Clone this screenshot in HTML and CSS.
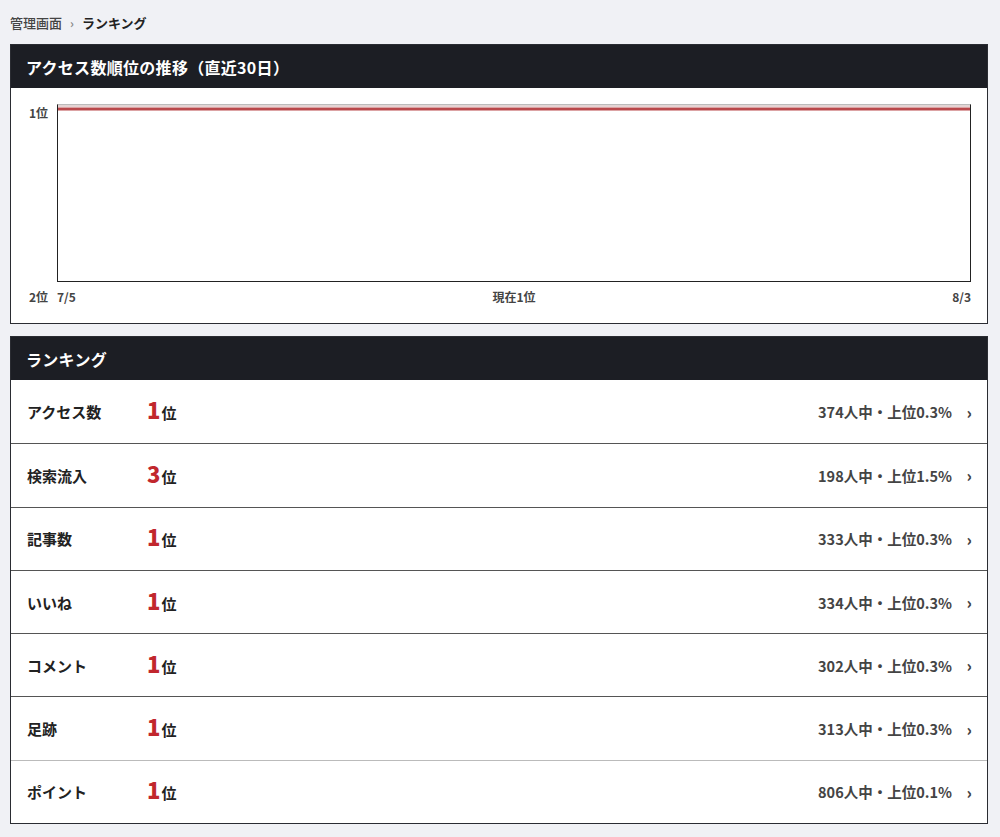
FILE: index.html
```html
<!DOCTYPE html>
<html lang="ja">
<head>
<meta charset="utf-8">
<title>ランキング</title>
<link rel="stylesheet" href="styles.css">
</head>
<body>
<nav class="crumbs">
  <a class="crumb-link" href="#">管理画面</a>
  <span class="crumb-sep">›</span>
  <span class="crumb-current">ランキング</span>
</nav>

<section class="panel">
  <h2 class="panel-head">アクセス数順位の推移（直近30日）</h2>
  <div class="chart">
    <div class="chart-grid">
      <div class="y-top">1位</div>
      <div class="plot">
        <svg class="plot-svg" viewBox="0 0 912 176" preserveAspectRatio="none">
          <line x1="0" y1="1" x2="912" y2="1" stroke="#c9a9a9" stroke-width="1"/>
          <line x1="0" y1="4" x2="912" y2="4" stroke="#b9484b" stroke-width="3"/>
        </svg>
      </div>
      <div class="y-bottom">2位</div>
      <div class="x-axis">
        <span>7/5</span>
        <span>現在1位</span>
        <span>8/3</span>
      </div>
    </div>
  </div>
</section>

<section class="panel">
  <h2 class="panel-head">ランキング</h2>
  <ul class="rank-list">
    <li class="rank-row"><span class="rank-name">アクセス数</span><span class="rank-pos"><b>1</b>位</span><span class="rank-meta">374人中・上位0.3%</span><span class="chev">›</span></li>
    <li class="rank-row"><span class="rank-name">検索流入</span><span class="rank-pos"><b>3</b>位</span><span class="rank-meta">198人中・上位1.5%</span><span class="chev">›</span></li>
    <li class="rank-row"><span class="rank-name">記事数</span><span class="rank-pos"><b>1</b>位</span><span class="rank-meta">333人中・上位0.3%</span><span class="chev">›</span></li>
    <li class="rank-row"><span class="rank-name">いいね</span><span class="rank-pos"><b>1</b>位</span><span class="rank-meta">334人中・上位0.3%</span><span class="chev">›</span></li>
    <li class="rank-row"><span class="rank-name">コメント</span><span class="rank-pos"><b>1</b>位</span><span class="rank-meta">302人中・上位0.3%</span><span class="chev">›</span></li>
    <li class="rank-row"><span class="rank-name">足跡</span><span class="rank-pos"><b>1</b>位</span><span class="rank-meta">313人中・上位0.3%</span><span class="chev">›</span></li>
    <li class="rank-row"><span class="rank-name">ポイント</span><span class="rank-pos"><b>1</b>位</span><span class="rank-meta">806人中・上位0.1%</span><span class="chev">›</span></li>
  </ul>
</section>
</body>
</html>
```

FILE: styles.css
```css
* { box-sizing: border-box; }

html, body {
  margin: 0;
  background: #f0f1f5;
}

body {
  padding: 12px 12px 12px 10px;
  font-family: "Noto Sans CJK JP", "Noto Sans", sans-serif;
  color: #222;
}

.crumbs {
  display: flex;
  align-items: center;
  gap: 8px;
  height: 20px;
  font-size: 13px;
  font-weight: 700;
  margin-bottom: 12px;
}

.crumb-link {
  color: #444;
  text-decoration: none;
  font-weight: 500;
}

.crumb-sep {
  color: #888;
  font-size: 12px;
}

.crumb-current {
  color: #222;
}

.panel {
  background: #fff;
  border: 1px solid #2a2c32;
  margin-bottom: 12px;
}

.panel-head {
  margin: 0;
  height: 43px;
  display: flex;
  align-items: center;
  padding-left: 15px;
  background: #1c1e24;
  color: #fff;
  font-size: 16px;
  font-weight: 700;
  letter-spacing: 0.3px;
}

/* trend chart */
.chart {
  padding: 16px 17px 19px 0;
}

.chart-grid {
  display: grid;
  grid-template-columns: 46px 914px;
  grid-template-rows: 178px 22px;
}

.y-top, .y-bottom {
  font-size: 12px;
  font-weight: 700;
  color: #444;
  text-align: right;
  padding-right: 9px;
}

.y-bottom {
  padding-top: 6px;
}

.plot {
  border: 1px solid #222;
  border-top-color: #bbb;
}

.plot-svg {
  display: block;
  width: 100%;
  height: 100%;
}

.x-axis {
  display: flex;
  justify-content: space-between;
  padding-top: 6px;
  font-size: 12px;
  font-weight: 700;
  color: #444;
}

/* ranking list */
.rank-list {
  list-style: none;
  margin: 0;
  padding: 0;
}

.rank-row {
  display: flex;
  align-items: center;
  height: 63.3px;
  padding: 0 15px 0 16px;
  border-top: 1px solid #555;
}

.rank-row:first-child {
  border-top: none;
}

.rank-row:last-child {
  border-top-color: #bbb;
}

.rank-name {
  width: 120px;
  font-size: 15px;
  font-weight: 700;
  color: #222;
}

.rank-pos {
  display: flex;
  align-items: baseline;
  line-height: 1;
  margin-bottom: 5px;
  font-size: 15px;
  font-weight: 700;
  color: #222;
}

.rank-pos b {
  font-family: "Noto Sans CJK JP", sans-serif;
  font-weight: 900;
  font-size: 22px;
  color: #c1272d;
  margin-right: 1px;
}

.rank-meta {
  margin-left: auto;
  font-size: 14.5px;
  font-weight: 700;
  color: #444;
}

.chev {
  width: 20px;
  text-align: right;
  font-size: 16px;
  font-weight: 900;
  color: #444;
}
```
